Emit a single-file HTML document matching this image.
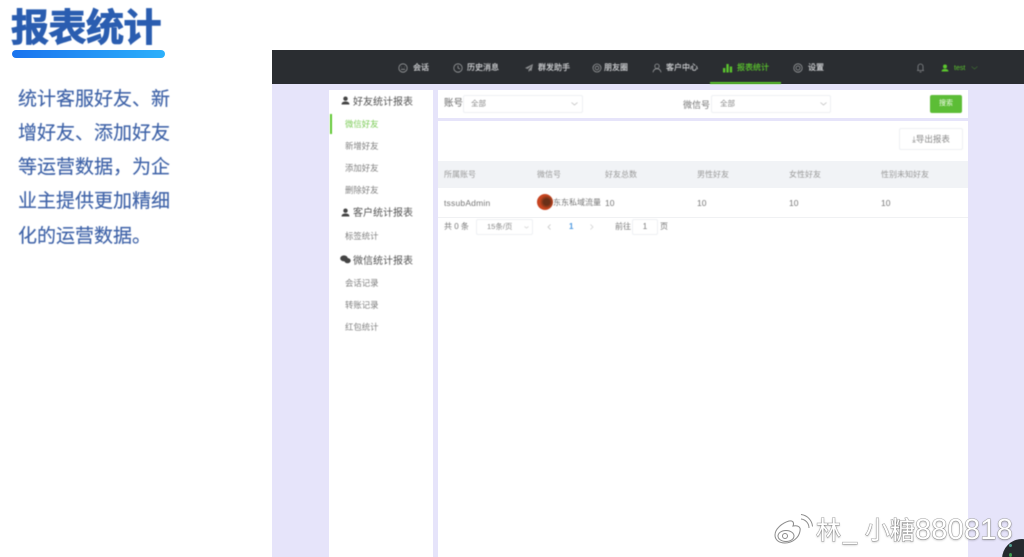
<!DOCTYPE html>
<html lang="zh"><head><meta charset="utf-8"><title>报表统计</title>
<style>
*{box-sizing:border-box;margin:0;padding:0}
html,body{width:1024px;height:557px;overflow:hidden;background:#fff}
body{position:relative;font-family:"Liberation Sans","Noto Sans CJK SC",sans-serif;color:#666}
.a{position:absolute;white-space:nowrap}
.soft{filter:blur(.5px)}
.nav{color:#d4d6d8;font-size:8px;line-height:12px;top:62px;-webkit-text-stroke:.15px #d4d6d8}
.side{color:#808080;font-size:8.4px;line-height:12px;left:345px}
.head{color:#555;font-size:10px;line-height:14px;left:353px}
.th{color:#999;font-size:8px;line-height:12px;top:168.5px}
.td{color:#777;font-size:8.5px;line-height:12px;top:197px}
.box{background:#fff;border:1px solid #eef0f3;border-radius:2px}
svg{position:absolute;overflow:visible}
</style></head><body>
<div class="a" style="left:272px;top:50px;width:752px;height:507px;background:#e6e4fa"></div>
<div class="a" style="left:272px;top:50px;width:752px;height:34px;background:#2a2d31"></div>
<div class="a" style="left:329px;top:90px;width:104px;height:467px;background:#fff"></div>
<div class="a" style="left:438px;top:90px;width:530px;height:28px;background:#fff"></div>
<div class="a" style="left:438px;top:121px;width:530px;height:436px;background:#fff"></div>
<div class="a" style="left:438px;top:161px;width:530px;height:27px;background:#f1f3f6"></div>
<div class="a" style="left:438px;top:217px;width:530px;height:1px;background:#f0f1f3"></div>

<div class="a" style="left:11px;top:5px;font-size:38px;line-height:48px;font-weight:700;color:#2a5db0;letter-spacing:-.5px;-webkit-text-stroke:.9px #2a5db0;filter:blur(.4px)">报表统计</div>
<div class="a" style="left:12px;top:50px;width:153px;height:8px;border-radius:4px;background:linear-gradient(90deg,#1a73ee,#2cb0fb)"></div>
<div class="a" style="left:18px;top:82.5px;width:156px;font-size:19px;line-height:34.3px;color:#3f63a8;white-space:normal;-webkit-text-stroke:.15px #3f63a8;filter:blur(.4px)">
统计客服好友、新<br>增好友、添加好友<br>等运营数据，为企<br>业主提供更加精细<br>化的运营数据。</div>

<div class="soft">
<svg style="left:398px;top:63px" width="10" height="10" viewBox="0 0 10 10" fill="none" stroke="#9a9c9e" stroke-width=".8"><circle cx="5" cy="5" r="4.2"/><path d="M3 6.3h4M3.2 4h.6M6.2 4h.6"/></svg>
<div class="a nav" style="left:413px">会话</div>
<svg style="left:453px;top:63px" width="10" height="10" viewBox="0 0 10 10" fill="none" stroke="#9a9c9e" stroke-width=".8"><circle cx="5" cy="5" r="4.2"/><path d="M5 2.5V5l2 1"/></svg>
<div class="a nav" style="left:467px">历史消息</div>
<svg style="left:524px;top:63px" width="10" height="10" viewBox="0 0 10 10" fill="#8f9193"><path d="M9 1 1 5l2.5 1L8 2.5 4.5 6.8V9l1.5-1.6 1.5.6z"/></svg>
<div class="a nav" style="left:538px">群发助手</div>
<svg style="left:592px;top:63px" width="10" height="10" viewBox="0 0 10 10" fill="none" stroke="#9a9c9e" stroke-width=".8"><circle cx="5" cy="5" r="4"/><circle cx="5" cy="5" r="1.8"/></svg>
<div class="a nav" style="left:604px">朋友圈</div>
<svg style="left:652px;top:63px" width="10" height="10" viewBox="0 0 10 10" fill="none" stroke="#9a9c9e" stroke-width=".8"><circle cx="5" cy="3.2" r="2.2"/><path d="M1 9.3c.5-2.5 2-3.6 4-3.6s3.5 1.1 4 3.6"/></svg>
<div class="a nav" style="left:666px">客户中心</div>
<svg style="left:722px;top:63px" width="11" height="10" viewBox="0 0 11 10" fill="#5cc72e"><rect x="1" y="5" width="2.3" height="4.5"/><rect x="4.4" y="1" width="2.3" height="8.5"/><rect x="7.8" y="3.5" width="2.3" height="6"/></svg>
<div class="a nav" style="left:737px;color:#5cc72e;-webkit-text-stroke:.15px #5cc72e">报表统计</div>
<div class="a" style="left:710px;top:82px;width:71px;height:2px;background:#5cc72e"></div>
<svg style="left:793px;top:63px" width="10" height="10" viewBox="0 0 10 10" fill="none" stroke="#9a9c9e" stroke-width=".8"><circle cx="5" cy="5" r="4.2"/><circle cx="5" cy="5" r="2"/></svg>
<div class="a nav" style="left:808px">设置</div>
<svg style="left:915px;top:62px" width="11" height="11" viewBox="0 0 11 11" fill="none" stroke="#85888b" stroke-width=".8"><path d="M2 8.5h7M3 8.5V4.5a2.5 2.5 0 0 1 5 0v4M4.5 10h2"/></svg>
<svg style="left:941px;top:64px" width="8" height="8" viewBox="0 0 8 8" fill="#5cc72e"><circle cx="4" cy="2.5" r="2"/><path d="M.5 7.5c.2-2 1.5-2.5 3.5-2.5s3.3.5 3.500 2.5z"/></svg>
<div class="a" style="left:954px;top:63px;font-size:7px;line-height:11px;color:#5cc72e">test</div>
<svg style="left:971px;top:66px" width="7" height="4" viewBox="0 0 7 4" fill="none" stroke="#3f6b33" stroke-width=".8"><path d="m.5.5 3 2.5 3-2.5"/></svg>

<svg style="left:341px;top:96px" width="9" height="9" viewBox="0 0 9 9" fill="#444"><circle cx="4.5" cy="2.7" r="2.2"/><path d="M.5 8.5c.2-2.3 1.7-3 4-3s3.800.7 4 3z"/></svg>
<div class="a head" style="top:95.5px">好友统计报表</div>
<div class="a" style="left:330px;top:114px;width:2px;height:20px;background:#5cc72e"></div>
<div class="a side" style="top:117.5px;color:#7acb55">微信好友</div>
<div class="a side" style="top:139.5px">新增好友</div>
<div class="a side" style="top:161.5px">添加好友</div>
<div class="a side" style="top:183.5px">删除好友</div>
<svg style="left:341px;top:208px" width="9" height="9" viewBox="0 0 9 9" fill="#444"><circle cx="4.5" cy="2.7" r="2.2"/><path d="M.5 8.5c.2-2.3 1.7-3 4-3s3.800.7 4 3z"/></svg>
<div class="a head" style="top:206.5px">客户统计报表</div>
<div class="a side" style="top:229.5px">标签统计</div>
<svg style="left:340px;top:255px" width="11" height="9" viewBox="0 0 11 9" fill="#444"><ellipse cx="4" cy="3.4" rx="3.8" ry="3"/><ellipse cx="7.5" cy="5.6" rx="3.2" ry="2.6"/></svg>
<div class="a head" style="top:254.5px">微信统计报表</div>
<div class="a side" style="top:276.5px">会话记录</div>
<div class="a side" style="top:298.5px">转账记录</div>
<div class="a side" style="top:321px">红包统计</div>

<div class="a" style="left:444px;top:97px;font-size:9.5px;line-height:14px;color:#666">账号</div>
<div class="a box" style="left:463px;top:95px;width:120px;height:18px"></div>
<div class="a" style="left:471px;top:98px;font-size:7.5px;line-height:11px;color:#888">全部</div>
<svg style="left:571px;top:102px" width="7" height="4" viewBox="0 0 7 4" fill="none" stroke="#bbb" stroke-width=".7"><path d="m.5.5 3 2.5 3-2.5"/></svg>
<div class="a" style="left:683px;top:98px;font-size:9px;line-height:14px;color:#777">微信号</div>
<div class="a box" style="left:711px;top:95px;width:120px;height:18px"></div>
<div class="a" style="left:720px;top:98px;font-size:7.5px;line-height:11px;color:#888">全部</div>
<svg style="left:820px;top:102px" width="7" height="4" viewBox="0 0 7 4" fill="none" stroke="#bbb" stroke-width=".7"><path d="m.5.5 3 2.5 3-2.5"/></svg>
<div class="a" style="left:930px;top:95px;width:32px;height:18px;background:#5cbd36;border-radius:2px;color:#eefae7;font-size:7px;line-height:18px;text-align:center">搜索</div>
<div class="a box" style="left:899px;top:128px;width:64px;height:22px;color:#888;font-size:8.5px;line-height:20px;text-align:center">⤓导出报表</div>

<div class="a th" style="left:444px">所属账号</div>
<div class="a th" style="left:537px">微信号</div>
<div class="a th" style="left:605px">好友总数</div>
<div class="a th" style="left:697px">男性好友</div>
<div class="a th" style="left:789px">女性好友</div>
<div class="a th" style="left:881px">性别未知好友</div>
<div class="a td" style="left:444px;letter-spacing:.2px">tssubAdmin</div>
<div class="a" style="left:537px;top:194px;width:16px;height:16px;border-radius:50%;background:radial-gradient(circle at 60% 50%,#6a3018 0 25%,#c9461f 55%,#c23a20 100%)"></div>
<div class="a td" style="left:553px;font-size:8px">东东私域流量</div>
<div class="a td" style="left:605px">10</div>
<div class="a td" style="left:697px">10</div>
<div class="a td" style="left:789px">10</div>
<div class="a td" style="left:881px">10</div>

<div class="a" style="left:444px;top:221px;font-size:8px;line-height:12px;color:#777">共 0 条</div>
<div class="a box" style="left:476px;top:219px;width:57px;height:16px;color:#888;font-size:7.5px;line-height:14px;padding-left:10px">15条/页</div>
<svg style="left:524px;top:226px" width="5" height="3" viewBox="0 0 5 3" fill="none" stroke="#ccc" stroke-width=".7"><path d="m.5.5 2 1.600 2-1.600"/></svg>
<svg style="left:547px;top:224px" width="4" height="6" viewBox="0 0 4 6" fill="none" stroke="#bbb" stroke-width=".7"><path d="M3.5.5 1 3l2.500 2.500"/></svg>
<div class="a" style="left:569px;top:221px;font-size:8px;line-height:12px;font-weight:700;color:#4a98e0">1</div>
<svg style="left:590px;top:224px" width="4" height="6" viewBox="0 0 4 6" fill="none" stroke="#ccc" stroke-width=".7"><path d="m.5.5 2.500 2.500-2.500 2.500"/></svg>
<div class="a" style="left:615px;top:221px;font-size:8px;line-height:12px;color:#777">前往</div>
<div class="a box" style="left:632px;top:219px;width:26px;height:16px;color:#777;font-size:8px;line-height:14px;text-align:center">1</div>
<div class="a" style="left:660px;top:221px;font-size:8px;line-height:12px;color:#777">页</div>
</div>

<div class="a" style="left:1002px;top:539px;width:40px;height:40px;border-radius:50%;background:#252a2e"></div>
<div class="a" style="left:1009px;top:544px;width:3px;height:3px;border-radius:50%;background:#4fa08f"></div>
<div class="a" style="left:1009px;top:553px;width:3px;height:4px;border-radius:50%;background:#3d9a4d"></div>

<svg style="left:772px;top:512px;filter:blur(.3px)" width="42" height="34" viewBox="0 0 42 34" fill="none" stroke="#fff" stroke-width="3"><ellipse cx="16" cy="23" rx="13" ry="8.5"/><path d="M30 6a9 9 0 0 1 9 9M30 1a13 13 0 0 1 11 13"/><g stroke="#8b8b8b" stroke-width="1"><path d="M3 23c0-6 7-12 14-14 5-1 5 3 4 5 5-1 8 1 7 5-1 7-8 12-15 12-6 0-10-3-10-8z"/><ellipse cx="14" cy="24" rx="8" ry="5.5"/><circle cx="13" cy="24" r="2.5"/><path d="M29 7a9 9 0 0 1 8 9M29 2.5a13 13 0 0 1 11.500 12"/></g></svg>
<div class="a" style="left:816px;top:513px;font-size:25px;line-height:34px;color:#fff;-webkit-text-stroke:1px #a5a5a5;paint-order:stroke fill;text-shadow:0 1px 2px rgba(0,0,0,.3);filter:blur(.3px)">林<span style="margin-left:2px">_</span><span style="margin-left:8px">小</span>糖<span style="font-size:29px;letter-spacing:.2px">880818</span></div>
</body></html>
